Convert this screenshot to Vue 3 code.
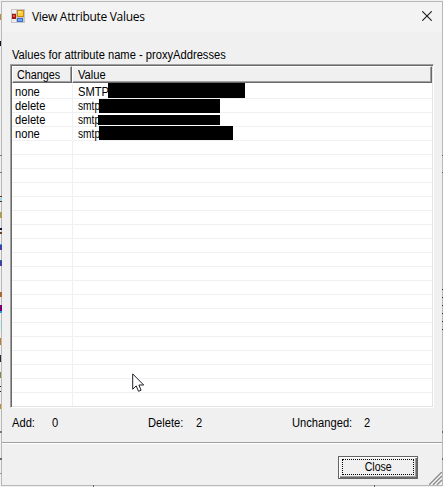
<template>
  <div class="desktop">
    <!-- slivers of the window behind the dialog -->
    <svg class="backdrop" width="443" height="487" shape-rendering="crispEdges" aria-hidden="true">
      <rect
        v-for="(mark, index) in backdropMarks"
        :key="index"
        :x="mark[0]"
        :y="mark[1]"
        :width="mark[2]"
        :height="mark[3]"
        :fill="mark[4]"
      />
    </svg>

    <div class="dialog" role="dialog" aria-labelledby="dialog-title">
      <header class="titlebar">
        <svg class="app-icon" width="14" height="14" viewBox="0 0 14 14" aria-hidden="true">
          <rect width="14" height="14" fill="#c6c6c6" />
          <rect x="1" y="1" width="4" height="3" fill="#f1f1f1" />
          <rect x="1" y="10" width="4" height="3" fill="#ededed" />
          <rect x="1" y="5" width="4" height="5" fill="#a51612" />
          <rect x="2" y="6" width="2" height="2" fill="#d85b50" />
          <rect x="6" y="1" width="7" height="7" fill="#c98b0d" />
          <rect x="7" y="2" width="5" height="5" fill="#ffcd3c" />
          <rect x="7" y="2" width="3" height="2" fill="#ffe48a" />
          <rect x="6" y="9" width="6" height="4" fill="#3c70d0" />
          <rect x="7" y="10" width="4" height="2" fill="#72a5f5" />
        </svg>
        <h1 id="dialog-title" class="title">View Attribute Values</h1>
        <button class="close-x" aria-label="Close window">
          <svg width="10" height="10" viewBox="0 0 10 10">
            <path d="M0.3 0.3 L9.7 9.7 M9.7 0.3 L0.3 9.7" stroke="#1a1a1a" stroke-width="1.1" fill="none" />
          </svg>
        </button>
      </header>

      <p class="caption"><span class="narrow">Values for attribute name - proxyAddresses</span></p>

      <div class="list">
        <div class="list-head">
          <div class="head-cell"><span class="narrow">Changes</span></div>
          <div class="head-cell"><span class="narrow">Value</span></div>
        </div>
        <div class="list-body">
          <div v-for="(row, index) in rows" :key="index" class="row">
            <div class="cell"><span class="narrow">{{ row.change }}</span></div>
            <div class="cell value">
              <span class="narrow" :class="{ tight: row.value === 'smtp' }">{{ row.value }}</span>
              <i
                v-if="row.mask"
                class="mask"
                :style="{ left: row.mask.x + 'px', top: row.mask.y + 'px', width: row.mask.w + 'px', height: row.mask.h + 'px' }"
              ></i>
            </div>
          </div>
        </div>
      </div>

      <div class="totals">
        <div class="total add"><span class="narrow">Add:</span><span class="narrow">0</span></div>
        <div class="total delete"><span class="narrow">Delete:</span><span class="narrow">2</span></div>
        <div class="total unchanged"><span class="narrow">Unchanged:</span><span class="narrow">2</span></div>
      </div>

      <footer class="footer">
        <button class="close-button"><span class="focus"><span class="narrow">Close</span></span></button>
      </footer>

      <svg class="grip" width="13" height="13" viewBox="0 0 13 13" aria-hidden="true">
        <path d="M0 13 L13 0 M4 13 L13 4 M8 13 L13 8" stroke="#8c8c8c" stroke-width="1.5" />
        <path d="M1.5 13 L13 1.5 M5.5 13 L13 5.5 M9.5 13 L13 9.5" stroke="#fff" stroke-width="0.6" />
      </svg>
    </div>

    <svg class="cursor" width="13" height="20" viewBox="0 0 13 20" aria-hidden="true">
      <path
        d="M0.7 0.9 V16.2 L4.2 12.9 L6.5 18.3 L9.1 17.2 L6.9 12 H11.7 Z"
        fill="#fff"
        stroke="#20202a"
        stroke-width="1"
      />
    </svg>
  </div>
</template>

<script setup>
const filled = [
  { change: 'none', value: 'SMTP', mask: { x: 35, y: -2, w: 137, h: 15 } },
  { change: 'delete', value: 'smtp', mask: { x: 26, y: 0, w: 121, h: 14 } },
  { change: 'delete', value: 'smtp', mask: { x: 25, y: 2, w: 122, h: 10 } },
  { change: 'none', value: 'smtp', mask: { x: 26, y: -1, w: 134, h: 14 } }
]

// the grid keeps drawing empty rows down to the bottom edge
const rows = [...filled, ...Array.from({ length: 19 }, () => ({ change: '', value: '' }))]

// x, y, width, height, colour
const backdropMarks = [
  [0, 14, 1, 6, '#c28a38'],
  [0, 41, 1, 5, '#111122'],
  [0, 155, 2, 1, '#777'],
  [0, 172, 2, 1, '#777'],
  [0, 196, 2, 1, '#593510'],
  [0, 198, 2, 3, '#9bdcf5'],
  [0, 201, 2, 1, '#593510'],
  [0, 212, 2, 6, '#a99b58'],
  [0, 228, 2, 2, '#111133'],
  [0, 232, 2, 2, '#6b3d18'],
  [0, 244, 2, 1, '#38a5f0'],
  [0, 245, 2, 5, '#4141a5'],
  [0, 260, 2, 1, '#277088'],
  [0, 261, 2, 5, '#4141a5'],
  [0, 292, 2, 5, '#a86a30'],
  [0, 305, 2, 6, '#72006f'],
  [0, 311, 2, 2, '#269be6'],
  [0, 321, 1, 9, '#c8f7fa'],
  [0, 338, 1, 7, '#c27b2a'],
  [0, 355, 1, 7, '#28283a'],
  [0, 372, 1, 6, '#8b8445'],
  [0, 386, 1, 1, '#222'],
  [0, 391, 1, 1, '#222'],
  [0, 404, 1, 5, '#c58a30'],
  [0, 431, 2, 2, '#777'],
  [0, 458, 2, 2, '#666'],
  [0, 473, 2, 1, '#999'],
  [442, 155, 1, 1, '#555'],
  [442, 172, 1, 1, '#555'],
  [442, 289, 1, 1, '#333'],
  [442, 297, 1, 1, '#333'],
  [442, 305, 1, 1, '#333'],
  [442, 313, 1, 1, '#333'],
  [442, 321, 1, 1, '#333'],
  [442, 329, 1, 1, '#333'],
  [442, 431, 1, 2, '#666'],
  [442, 458, 1, 2, '#666'],
  [93, 485, 1, 2, '#666'],
  [374, 485, 1, 2, '#666']
]
</script>

<style>
body {
  margin: 0;
  overflow: hidden;
}
</style>

<style scoped>
.desktop {
  position: relative;
  width: 443px;
  height: 487px;
  padding: 1px 0 0 1px;
  box-sizing: border-box;
  background: #f0f0f0;
  color: #000;
  font-family: "Liberation Sans", Arial, sans-serif;
  font-size: 12px;
  line-height: 14px;
}

.backdrop {
  position: absolute;
  left: 0;
  top: 0;
  z-index: 1;
}

.dialog {
  position: relative;
  display: flex;
  flex-direction: column;
  width: 442px;
  height: 485px;
  box-sizing: border-box;
  border: 1px solid #b8b8b8;
  background: #f0f0f0;
}

.narrow {
  display: inline-block;
  white-space: pre;
  transform: scaleX(0.93);
  transform-origin: 0 50%;
}

.narrow.tight {
  transform: scaleX(0.85);
}

.titlebar {
  display: flex;
  align-items: center;
  height: 30px;
  padding: 0 9px;
  box-sizing: border-box;
  padding-bottom: 2px;
  background: #f3f3f3;
}

.app-icon {
  margin-right: 7px;
}

.title {
  flex: 1;
  margin: 1px 0 0;
  font: 400 12px/16px "Open Sans", "Noto Sans", sans-serif;
  letter-spacing: -0.3px;
}

.close-x {
  display: flex;
  padding: 0;
  margin-right: 1px;
  border: 0;
  background: none;
}

.caption {
  height: 14px;
  margin: 16px 0 2px 10px;
}

.list {
  display: flex;
  flex-direction: column;
  width: 424px;
  height: 344px;
  margin-left: 8px;
  box-sizing: border-box;
  border: 1px solid;
  border-color: #a0a0a0 #fff #fff #a0a0a0;
  box-shadow: inset 1px 1px #696969, inset -1px -1px #e3e3e3;
  padding: 1px;
  background: #fff;
}

.list-head {
  display: grid;
  grid-template-columns: 60px 1fr;
  height: 17px;
  flex: none;
}

.head-cell {
  box-sizing: border-box;
  padding: 1px 0 0 5px;
  border: 1px solid;
  border-color: #fff #696969 #696969 #fff;
  box-shadow: inset -1px -1px #a0a0a0;
  background: #f0f0f0;
}

.head-cell:first-child {
  padding-left: 4px;
}

.head-cell:first-child .narrow {
  transform: scaleX(0.9);
}

.list-body {
  flex: 1;
  overflow: hidden;
  padding-top: 2px;
}

.row {
  display: grid;
  grid-template-columns: 61px 1fr;
  height: 14px;
  box-sizing: border-box;
  border-bottom: 1px solid #f0f0f0;
}

.cell {
  height: 13px;
  padding-left: 3px;
  border-right: 1px solid #f0f0f0;
}

.cell.value {
  position: relative;
  padding-left: 5px;
  border-right: 0;
}

.mask {
  position: absolute;
  background: #000;
}

.totals {
  display: flex;
  height: 34px;
  padding: 8px 0 0 10px;
  box-sizing: border-box;
}

.total {
  display: grid;
}

.add {
  width: 136px;
  grid-template-columns: 40px 1fr;
}

.delete {
  width: 144px;
  grid-template-columns: 48px 1fr;
}

.unchanged {
  grid-template-columns: 72px 1fr;
}

.footer {
  display: flex;
  flex: 1;
  justify-content: flex-end;
  align-items: flex-start;
  padding: 13px 24px 0 0;
  border-top: 1px solid #a0a0a0;
  box-shadow: inset 0 1px #fff;
}

.close-button {
  width: 80px;
  height: 23px;
  padding: 2px 3px 3px 2px;
  border: 1px solid #646464;
  border-radius: 0;
  box-shadow: inset 1px 1px #fff, inset -1px -1px #696969, inset -2px -2px #a0a0a0;
  background: #f0f0f0;
  color: #000;
  font: inherit;
}

.focus {
  display: block;
  height: 16px;
  box-sizing: border-box;
  margin: 0 0 0 1px;
  border: 1px dotted #000;
  line-height: 14px;
}

.focus .narrow {
  transform: scaleX(0.88);
  transform-origin: 45% 50%;
}

.grip {
  position: absolute;
  right: 0;
  bottom: 0;
}

.cursor {
  position: absolute;
  left: 132px;
  top: 373px;
}
</style>
